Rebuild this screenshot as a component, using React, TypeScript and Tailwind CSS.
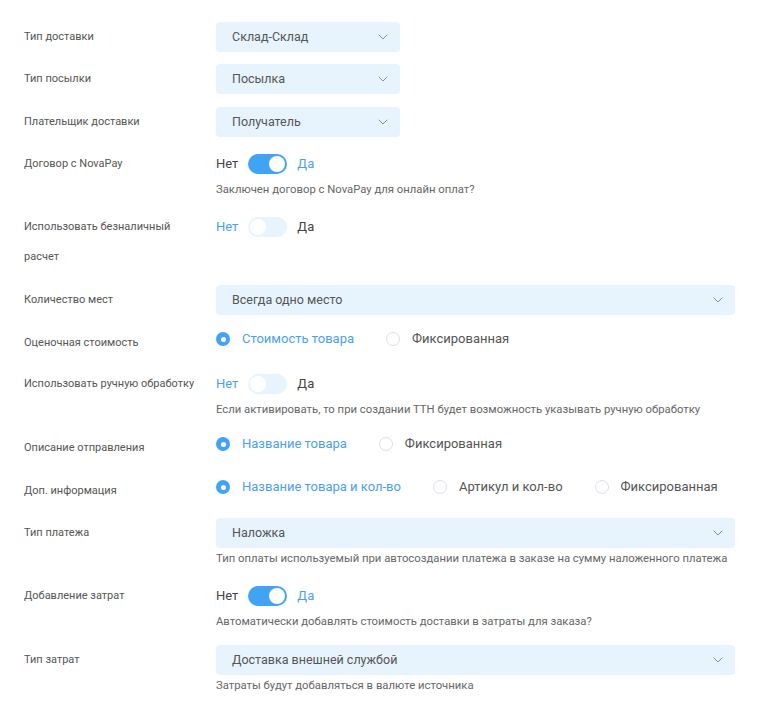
import React from "react";

const BLUE = "text-[#4a9ff5]";

const Chevron = () => (
  <svg width="10" height="6" viewBox="0 0 10 6" fill="none" className="shrink-0">
    <path d="M1 1l4 4 4-4" stroke="#8a8f99" strokeWidth="1" strokeLinecap="round" strokeLinejoin="round" />
  </svg>
);

const Select = ({ value, wide }: { value: string; wide?: boolean }) => (
  <div
    className={`h-[30px] ${wide ? "w-[519px]" : "w-[184px]"} rounded bg-[#e7f4fd] flex items-center justify-between pl-4 pr-3 text-[12.5px] text-[#555]`}
  >
    <span>{value}</span>
    <Chevron />
  </div>
);

const Toggle = ({ on }: { on: boolean }) => (
  <div className="h-[30px] flex items-center text-[13px]">
    <span className={on ? "text-[#444]" : BLUE}>Нет</span>
    <div
      className={`mx-[10px] w-[39px] h-5 rounded-full p-[2px] flex ${
        on ? "bg-[#42a3f5] justify-end" : "bg-[#e7f4fd] justify-start"
      }`}
    >
      <div className="w-4 h-4 rounded-full bg-white" />
    </div>
    <span className={on ? BLUE : "text-[#444]"}>Да</span>
  </div>
);

const Radios = ({ items }: { items: string[] }) => (
  <div className="h-[22px] flex items-center gap-8 text-[13px]">
    {items.map((it, i) => (
      <div key={it} className="flex items-center gap-3">
        {i === 0 ? (
          <div className="w-[14px] h-[14px] rounded-full bg-[#42a3f5] flex items-center justify-center">
            <div className="w-[5px] h-[5px] rounded-full bg-white" />
          </div>
        ) : (
          <div className="w-[14px] h-[14px] rounded-full border border-[#dcdfe6] bg-white" />
        )}
        <span className={i === 0 ? BLUE : "text-[#555]"}>{it}</span>
      </div>
    ))}
  </div>
);

const Hint = ({ children }: { children: React.ReactNode }) => (
  <div className="mt-[3px] text-[11.3px] leading-4 text-[#666] whitespace-nowrap">{children}</div>
);

const Row = ({
  label,
  className,
  children,
}: {
  label: string;
  className: string;
  children: React.ReactNode;
}) => (
  <div className={`flex items-start ${className}`}>
    <div className="w-[176px] mr-4 text-[11px] leading-[30px] text-[#555]">{label}</div>
    <div className="flex flex-col">{children}</div>
  </div>
);

export default function App() {
  return (
    <div
      className="w-[759px] h-[703px] bg-white pl-6 pt-[22px] overflow-hidden"
      style={{ fontFamily: "Roboto, 'Liberation Sans', sans-serif" }}
    >
      <Row label="Тип доставки" className="">
        <Select value="Склад-Склад" />
      </Row>
      <Row label="Тип посылки" className="mt-3">
        <Select value="Посылка" />
      </Row>
      <Row label="Плательщик доставки" className="mt-[13px]">
        <Select value="Получатель" />
      </Row>
      <Row label="Договор с NovaPay" className="mt-3">
        <Toggle on />
        <Hint>Заключен договор с NovaPay для онлайн оплат?</Hint>
      </Row>
      <Row label="Использовать безналичный расчет" className="mt-[14px]">
        <Toggle on={false} />
      </Row>
      <Row label="Количество мест" className="mt-[13px]">
        <Select value="Всегда одно место" wide />
      </Row>
      <Row label="Оценочная стоимость" className="mt-[13px]">
        <Radios items={["Стоимость товара", "Фиксированная"]} />
      </Row>
      <Row label="Использовать ручную обработку" className="mt-[11px]">
        <Toggle on={false} />
        <Hint>Если активировать, то при создании ТТН будет возможность указывать ручную обработку</Hint>
      </Row>
      <Row label="Описание отправления" className="mt-[15px]">
        <Radios items={["Название товара", "Фиксированная"]} />
      </Row>
      <Row label="Доп. информация" className="mt-[13px]">
        <Radios items={["Название товара и кол-во", "Артикул и кол-во", "Фиксированная"]} />
      </Row>
      <Row label="Тип платежа" className="mt-3">
        <Select value="Наложка" wide />
        <Hint>Тип оплаты используемый при автосоздании платежа в заказе на сумму наложенного платежа</Hint>
      </Row>
      <Row label="Добавление затрат" className="mt-[14px]">
        <Toggle on />
        <Hint>Автоматически добавлять стоимость доставки в затраты для заказа?</Hint>
      </Row>
      <Row label="Тип затрат" className="mt-[15px]">
        <Select value="Доставка внешней службой" wide />
        <Hint>Затраты будут добавляться в валюте источника</Hint>
      </Row>
    </div>
  );
}
